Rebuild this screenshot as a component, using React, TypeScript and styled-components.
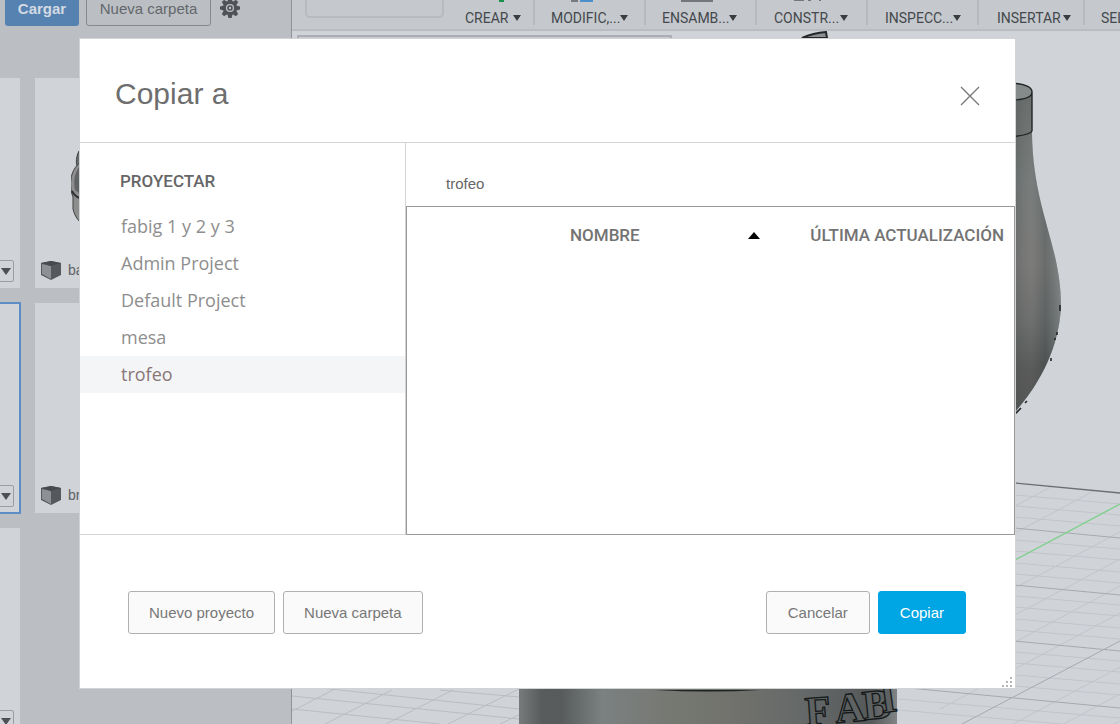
import React from "react";
import styled, { createGlobalStyle, css } from "styled-components";

const GlobalStyle = createGlobalStyle`
  * { box-sizing: border-box; }
  html, body, #root { height: 100%; }
  body { margin: 0; overflow: hidden; font-family: "Liberation Sans", Arial, sans-serif; }
  button { font-family: inherit; }
`;

const condensed = 'Roboto, "Liberation Sans", sans-serif';

const Workspace = styled.div`
  display: grid;
  grid-template-columns: 292px 1fr;
  min-height: 100vh;
  height: 100%;
  background: #d0d4d9;
`;

const DataPanel = styled.aside`
  display: flex;
  flex-direction: column;
  gap: 52px;
  overflow: hidden;
  background: #bbbfc4;
  border-right: 1px solid #8f9397;
`;

const PanelBar = styled.div`
  display: flex;
  align-items: flex-end;
  gap: 7px;
  height: 26px;
  padding-left: 5px;
`;

const panelButton = css`
  flex: none;
  height: 36px;
  padding: 0;
  border-radius: 3px;
  font-size: 15px;
`;

const UploadButton = styled.button`
  ${panelButton}
  width: 74px;
  border: 0;
  background: #5682b2;
  color: #d3dae2;
  font-weight: 700;
`;

const FolderButton = styled.button`
  ${panelButton}
  width: 125px;
  border: 1px solid #85898d;
  background: transparent;
  color: #63676b;
`;

const GearButton = styled.button`
  display: flex;
  flex: none;
  align-items: center;
  justify-content: center;
  width: 24px;
  height: 36px;
  padding: 0;
  border: 0;
  background: transparent;
`;

const Tiles = styled.div`
  display: grid;
  grid-template-columns: 20px 1fr;
  grid-auto-rows: 210px;
  gap: 15px;
`;

const Tile = styled.div<{ $selected?: boolean; $cut?: boolean }>`
  display: flex;
  flex-direction: column;
  align-items: ${(p) => (p.$cut ? "flex-end" : "stretch")};
  justify-content: space-between;
  overflow: hidden;
  padding: 0 6px 6px;
  background: #d0d3d8;
  ${(p) =>
    p.$selected &&
    css`
      margin: -1px -1px -1px 0;
      border: 2px solid #5b8ec4;
      border-left: 0;
      padding: 0 5px 5px;
    `}
`;

const TilePreview = styled.div`
  height: 140px;
  padding: 65px 0 0 30px;
`;

const TileCaption = styled.div`
  display: flex;
  align-items: center;
  gap: 6px;
  height: 24px;
  color: #5d6165;
  font-size: 14px;
`;

const VersionButton = styled.button`
  display: flex;
  flex: none;
  align-items: center;
  justify-content: flex-end;
  width: 36px;
  height: 22px;
  padding: 0 2px;
  border: 1px solid #9a9da1;
  border-radius: 2px;
  background: transparent;
`;

const Caret = styled.span<{ $size?: number }>`
  flex: none;
  width: 0;
  height: 0;
  border: ${(p) => p.$size || 4}px solid transparent;
  border-top: ${(p) => (p.$size || 4) + 2}px solid ${(p) => (p.$size ? "#4c5054" : "#3a3d40")};
  border-bottom: 0;
`;

const Stage = styled.main`
  display: flex;
  flex-direction: column;
  min-width: 0;
  overflow: hidden;
`;

const Ribbon = styled.nav`
  display: flex;
  flex: none;
  height: 31px;
  padding-left: 13px;
  overflow: hidden;
  border-bottom: 2px solid #b9bdc1;
  background: #c5c9cd;
`;

const WorkspacePicker = styled.div`
  flex: none;
  width: 139px;
  height: 18px;
  border: 2px solid #b7bbbf;
  border-top: 0;
  border-radius: 0 0 5px 5px;
`;

const RibbonGroup = styled.div<{ $width: number; $left?: number; $right?: number }>`
  display: flex;
  flex: none;
  flex-direction: column;
  justify-content: space-between;
  width: ${(p) => p.$width}px;
  height: 25px;
  padding: 0 ${(p) => p.$right ?? 18}px 0 ${(p) => p.$left ?? 17}px;
  border-right: 2px solid #b5b9bd;
`;

const RibbonIcon = styled.svg`
  display: block;
  width: 100%;
  height: 3px;
`;

const RibbonButton = styled.button`
  display: flex;
  align-items: center;
  justify-content: space-between;
  height: 14px;
  padding: 0;
  border: 0;
  background: transparent;
  color: #44484c;
  font: 400 14px/14px ${condensed};
  white-space: nowrap;
`;

const Viewport = styled.div`
  flex: 1;
  min-height: 0;
`;

const Scene = styled.svg`
  display: block;
  width: 100%;
  height: 100%;
`;

const Overlay = styled.div`
  position: fixed;
  inset: 0;
  padding: 38px 104px 35px 79px;
`;

const Dialog = styled.section`
  display: flex;
  flex-direction: column;
  width: 100%;
  border: 1px solid #d2d3d4;
  background: #fff;
`;

const DialogHeader = styled.header`
  display: flex;
  align-items: center;
  justify-content: space-between;
  height: 104px;
  padding: 6px 35px 0;
  border-bottom: 1px solid #d4d4d4;
`;

const Title = styled.h1`
  margin: 0;
  color: #6e6e6e;
  font-size: 30px;
  font-weight: 400;
  line-height: 36px;
`;

const CloseButton = styled.button`
  display: flex;
  padding: 0;
  margin-top: 4px;
  border: 0;
  background: transparent;
`;

const DialogBody = styled.div`
  display: grid;
  grid-template-columns: 326px 1fr;
  min-height: 392px;
`;

const ProjectPane = styled.nav`
  border-right: 1px solid #d4d4d4;
  border-bottom: 1px solid #d4d4d4;
`;

const PaneHeading = styled.h2`
  margin: 0;
  padding: 27px 40px 16px;
  color: #666;
  font: 500 17px/22px ${condensed};
`;

const ProjectList = styled.ul`
  margin: 0;
  padding: 0;
  list-style: none;
`;

const ProjectLink = styled.a<{ $active?: boolean }>`
  display: block;
  height: 37px;
  padding-left: 41px;
  background: ${(p) => (p.$active ? "#f4f5f7" : "transparent")};
  color: ${(p) => (p.$active ? "#8a7676" : "#8e8e8e")};
  font: 400 18px/37px "Open Sans", "Noto Sans", sans-serif;
  text-decoration: none;
`;

const FilePane = styled.div`
  display: flex;
  flex-direction: column;
`;

const Breadcrumb = styled.div`
  height: 63px;
  padding: 31px 40px 0;
  color: #666;
  font-size: 15px;
  line-height: 20px;
`;

const FileFrame = styled.div`
  flex: 1;
  border: 1px solid #999;
`;

const FileTable = styled.table`
  width: 100%;
  border-collapse: collapse;
  table-layout: fixed;
`;

const HeaderCell = styled.th<{ $width?: number }>`
  width: ${(p) => (p.$width ? p.$width + "px" : "auto")};
  height: 56px;
  padding: 0 10px 0 0;
  color: #737373;
  font: 500 17px/22px ${condensed};
  text-align: right;
  white-space: nowrap;
`;

const SortLabel = styled.span`
  display: flex;
  align-items: center;
  justify-content: space-between;
  padding-left: 163px;
`;

const SortArrow = styled.span`
  width: 0;
  height: 0;
  border: 6px solid transparent;
  border-top: 0;
  border-bottom: 7px solid #000;
`;

const DialogFooter = styled.footer`
  display: flex;
  justify-content: space-between;
  height: 153px;
  padding: 56px 49px 0 48px;
  position: relative;
`;

const ButtonRow = styled.div`
  display: flex;
  gap: 8px;
`;

const ActionButton = styled.button<{ $primary?: boolean; $inset?: number }>`
  height: 43px;
  padding: 0 ${(p) => p.$inset ?? 20}px;
  border: 1px solid ${(p) => (p.$primary ? "#00a5e3" : "#b0b0b0")};
  border-radius: 3px;
  background: ${(p) => (p.$primary ? "#00a5e3" : "#fafafa")};
  color: ${(p) => (p.$primary ? "#fff" : "#777")};
  font-size: 15px;
`;

const ResizeGrip = styled.svg`
  position: absolute;
  right: 1px;
  bottom: 0;
`;

const Gear = () => (
  <svg width="22" height="22" viewBox="-11 -11 22 22" aria-hidden="true">
    <g fill="#4f5357">
      {[0, 45, 90, 135, 180, 225, 270, 315].map((angle) => (
        <path key={angle} d="M-1.6-10h3.2l1 4h-5.2z" transform={`rotate(${angle})`} />
      ))}
    </g>
    <circle r="5.6" fill="none" stroke="#4f5357" strokeWidth="3" />
    <circle r="2" fill="none" stroke="#4f5357" strokeWidth="1.6" />
  </svg>
);

const Cube = () => (
  <svg width="21" height="20" viewBox="0 0 21 20" aria-hidden="true">
    <path d="M0 3 10 1l10 2v12l-10 5L0 15z" fill="#55585d" />
    <path d="M1 4l9 2v13l-9-5z" fill="#8d9095" />
    <path d="M0 3 10 1l10 2-10 3z" fill="#46494d" />
  </svg>
);

const PartPreview = () => (
  <svg width="60" height="84" viewBox="0 0 60 84" aria-hidden="true">
    <path d="M8 8C4 16 5 23 8 28" fill="#686b6d" stroke="#3e4042" />
    <path d="M10 19C-2 27-2 44 2 54v12c2 8 5 11 9 15h30V19z" fill="#8d8e8d" stroke="#3e4042" />
    <path d="M9 23C4 29 2 37 4 47l9 7V20z" fill="#606465" />
    <path d="M1 48c2 4 4 6 8 7" fill="none" stroke="#2f3132" strokeWidth="2" />
  </svg>
);

const minorRows = [495, 506, 517, 540, 551, 563, 574, 596, 607, 619, 630, 652, 663, 675, 686, 709, 720];
const majorRows = [528, 585, 641, 698];
const diagonals = [505, 532, 559, 587, 614, 641, 668, 722, 749, 776];

const ModelScene = () => (
  <Scene viewBox="292 31 828 693" preserveAspectRatio="xMaxYMax slice" aria-hidden="true">
    <defs>
      <linearGradient id="base" x1="519" x2="897" y1="0" y2="0" gradientUnits="userSpaceOnUse">
        <stop offset="0" stopColor="#777b7b" />
        <stop offset="0.06" stopColor="#585c5d" />
        <stop offset="0.11" stopColor="#575b5c" />
        <stop offset="0.22" stopColor="#7b8081" />
        <stop offset="0.4" stopColor="#767872" />
        <stop offset="0.58" stopColor="#70716c" />
        <stop offset="0.76" stopColor="#646868" />
        <stop offset="0.93" stopColor="#555959" />
        <stop offset="1" stopColor="#808484" />
      </linearGradient>
      <linearGradient id="vase" x1="0" x2="0" y1="83" y2="413" gradientUnits="userSpaceOnUse">
        <stop offset="0" stopColor="#5c6161" />
        <stop offset="0.3" stopColor="#717878" />
        <stop offset="0.55" stopColor="#767675" />
        <stop offset="0.72" stopColor="#626565" />
        <stop offset="0.86" stopColor="#454848" />
        <stop offset="1" stopColor="#3d3f3f" />
      </linearGradient>
      <linearGradient id="edge" x1="1016" x2="1061" y1="0" y2="0" gradientUnits="userSpaceOnUse">
        <stop offset="0" stopColor="#626665" stopOpacity="0.5" />
        <stop offset="0.35" stopColor="#8b8885" stopOpacity="0.3" />
        <stop offset="0.65" stopColor="#565c5c" stopOpacity="0.4" />
        <stop offset="1" stopColor="#939999" stopOpacity="0.5" />
      </linearGradient>
    </defs>
    <rect x="298" y="36" width="373" height="12" fill="#c9cdd1" stroke="#9fa3a7" strokeWidth="1.5" />
    <path d="M802 38Q813 33 826 32l1 6z" fill="#8b8f91" stroke="#25282a" strokeWidth="2" />

    <g stroke="#c1c5c9" strokeWidth="1">
      {minorRows.map((y) => (
        <path key={y} d={`M898 ${y - 10}L1120 ${y + 9}`} />
      ))}
      {diagonals.map((y) => (
        <path key={y} d={`M940 ${y + 41}L1120 ${y - 55}`} />
      ))}
    </g>
    <path d="M898 400H1120V493L898 472z" fill="#d0d4d9" />
    <g stroke="#a6aaae" strokeWidth="1">
      {majorRows.map((y) => (
        <path key={y} d={`M898 ${y - 11}L1120 ${y + 10}`} />
      ))}
      <path d="M962 724L1120 641" />
    </g>
    <path d="M1015 483L1120 493" stroke="#6b6e72" strokeWidth="1.3" />
    <path d="M1015 560L1120 504" stroke="#82d18f" strokeWidth="1.4" />
    <g stroke="#b9bdc1" strokeWidth="1">
      <path d="M292 696L519 719M292 685L519 709M440 690L519 697M292 709L440 724" />
      <path d="M292 711L333 690M325 724L392 690M386 724L453 690M448 724L519 689M500 724L519 715" />
    </g>

    <path d="M1000 83Q1032 83 1032 94V133C1033 210 1061 245 1061 306C1059 355 1032 398 1000 427z" fill="url(#vase)" />
    <path d="M1000 83Q1032 83 1032 94V133C1033 210 1061 245 1061 306C1059 355 1032 398 1000 427z" fill="url(#edge)" />
    <path d="M1010 83Q1032 84 1032 92T1010 100z" fill="#858a8a" />
    <path d="M1010 83Q1032 84 1032 92T1010 100M1032 92V131Q1030 135 1010 137" fill="none" stroke="#222526" strokeWidth="1.4" />
    <path d="M1060 305V311M1057 332V335M1055 338V340M1051 358V361M1027 401L1025 403M1021 408L1015 414" fill="none" stroke="#242627" strokeWidth="1.6" />

    <rect x="519" y="680" width="378" height="44" fill="url(#base)" />
    <path d="M655 690Q710 693 760 690z" fill="#1c2422" />
    <g fill="#5e6262" stroke="#15191a" strokeWidth="1.3" fontFamily="Liberation Serif, serif" fontWeight="700" fontSize="42">
      <text x="806" y="726" transform="rotate(-4 806 726)">F</text>
      <text x="836" y="723" transform="rotate(-5 836 723)">A</text>
      <text x="864" y="720" transform="rotate(-6 864 720)">B</text>
      <text x="882" y="713" transform="rotate(-8 882 713)">I</text>
    </g>
  </Scene>
);

type Group = { label: string; width: number; left?: number; right?: number; icon?: React.ReactNode };

const groups: Group[] = [
  { label: "CREAR", width: 91, left: 21, right: 12, icon: <rect x="34" y="0" width="5" height="2" fill="#17924a" /> },
  {
    label: "MODIFIC,...",
    width: 111,
    left: 16,
    icon: (
      <>
        <rect x="20" width="7" height="2" fill="#777b80" />
        <rect x="29" width="13" height="2" fill="#4c8fc9" />
      </>
    ),
  },
  { label: "ENSAMB...", width: 111, left: 16, icon: <rect x="19" width="32" height="2" fill="#73777c" /> },
  {
    label: "CONSTR...",
    width: 111,
    icon: <path d="M20 0h10v1H20zM34 0h3v1h-3zM45 0h2v1h-2z" fill="#73777c" />,
  },
  { label: "INSPECC...", width: 111 },
  { label: "INSERTAR", width: 106, left: 18, right: 12 },
  { label: "SELECCIONAR", width: 130, left: 16 },
];

const projects = ["fabig 1 y 2 y 3", "Admin Project", "Default Project", "mesa", "trofeo"];

export default function App() {
  return (
    <>
      <GlobalStyle />
      <Workspace>
        <DataPanel>
          <PanelBar>
            <UploadButton>Cargar</UploadButton>
            <FolderButton>Nueva carpeta</FolderButton>
            <GearButton aria-label="Configuración">
              <Gear />
            </GearButton>
          </PanelBar>
          <Tiles>
            {["ba", "br", ""].map((name, row) => (
              <React.Fragment key={row}>
                <Tile $cut $selected={row === 1}>
                  <span />
                  <VersionButton aria-label="Versiones">
                    <Caret $size={5} />
                  </VersionButton>
                </Tile>
                {name && (
                  <Tile>
                    <TilePreview>{row === 0 && <PartPreview />}</TilePreview>
                    <TileCaption>
                      <Cube />
                      {name}
                    </TileCaption>
                  </Tile>
                )}
              </React.Fragment>
            ))}
          </Tiles>
        </DataPanel>
        <Stage>
          <Ribbon>
            <WorkspacePicker />
            {groups.map((g) => (
              <RibbonGroup key={g.label} $width={g.width} $left={g.left} $right={g.right}>
                <RibbonIcon aria-hidden="true">{g.icon}</RibbonIcon>
                <RibbonButton>
                  {g.label}
                  <Caret />
                </RibbonButton>
              </RibbonGroup>
            ))}
          </Ribbon>
          <Viewport>
            <ModelScene />
          </Viewport>
        </Stage>
      </Workspace>
      <Overlay>
        <Dialog role="dialog" aria-labelledby="dialog-title">
          <DialogHeader>
            <Title id="dialog-title">Copiar a</Title>
            <CloseButton aria-label="Cerrar">
              <svg width="20" height="20" viewBox="0 0 20 20" fill="none" stroke="#777" strokeWidth="1.3" aria-hidden="true">
                <path d="M1 1l18 18M19 1L1 19" />
              </svg>
            </CloseButton>
          </DialogHeader>
          <DialogBody>
            <ProjectPane>
              <PaneHeading>PROYECTAR</PaneHeading>
              <ProjectList>
                {projects.map((p) => (
                  <li key={p}>
                    <ProjectLink href="#" $active={p === "trofeo"}>
                      {p}
                    </ProjectLink>
                  </li>
                ))}
              </ProjectList>
            </ProjectPane>
            <FilePane>
              <Breadcrumb>trofeo</Breadcrumb>
              <FileFrame>
                <FileTable>
                  <thead>
                    <tr>
                      <HeaderCell>
                        <SortLabel>
                          NOMBRE
                          <SortArrow />
                        </SortLabel>
                      </HeaderCell>
                      <HeaderCell $width={244}>ÚLTIMA ACTUALIZACIÓN</HeaderCell>
                    </tr>
                  </thead>
                </FileTable>
              </FileFrame>
            </FilePane>
          </DialogBody>
          <DialogFooter>
            <ButtonRow>
              <ActionButton>Nuevo proyecto</ActionButton>
              <ActionButton>Nueva carpeta</ActionButton>
            </ButtonRow>
            <ButtonRow>
              <ActionButton $inset={21}>Cancelar</ActionButton>
              <ActionButton $primary $inset={21}>
                Copiar
              </ActionButton>
            </ButtonRow>
            <ResizeGrip width="12" height="12" fill="#b5b5b5" aria-hidden="true">
              <path d="M8 1h2v2H8zM4 5h2v2H4zM8 5h2v2H8zM0 9h2v2H0zM4 9h2v2H4zM8 9h2v2H8z" />
            </ResizeGrip>
          </DialogFooter>
        </Dialog>
      </Overlay>
    </>
  );
}
